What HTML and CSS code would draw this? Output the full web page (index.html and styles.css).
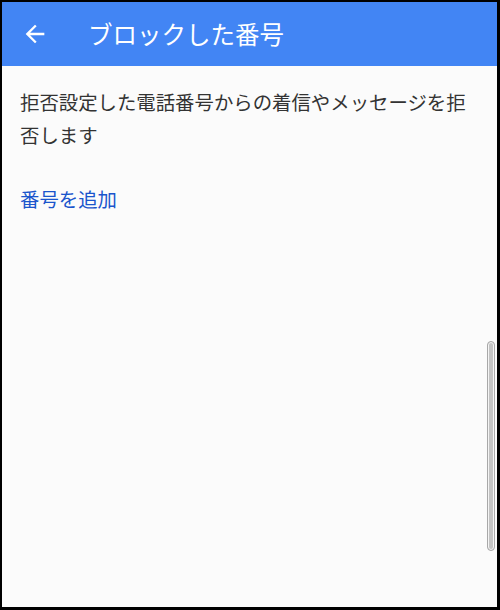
FILE: index.html
```html
<!DOCTYPE html>
<html lang="ja">
<head>
<meta charset="utf-8">
<link rel="stylesheet" href="styles.css">
</head>
<body>
<div class="frame">
  <header class="appbar">
    <span class="back">
      <svg viewBox="0 0 24 24" width="28" height="28"><path d="M20 11H7.83l5.59-5.59L12 4l-8 8 8 8 1.41-1.41L7.83 13H20v-2z" fill="#fff"/></svg>
    </span>
    <h1 class="title">ブロックした番号</h1>
  </header>
  <main class="content">
    <p class="desc">拒否設定した電話番号からの着信やメッセージを拒否します</p>
    <a class="add">番号を追加</a>
    <div class="scrollbar"></div>
  </main>
</div>
</body>
</html>
```
FILE: styles.css
```css
html, body {
  margin: 0;
  padding: 0;
}
body {
  width: 500px;
  height: 610px;
  font-family: "Noto Sans CJK JP", "Noto Sans", sans-serif;
}
.frame {
  box-sizing: border-box;
  width: 500px;
  height: 610px;
  border-style: solid;
  border-color: #000;
  border-width: 2px 3px 3px 2px;
  background: #fbfbfb;
  display: flex;
  flex-direction: column;
}
.appbar {
  height: 64px;
  background: #4285f4;
  display: flex;
  align-items: center;
  flex-shrink: 0;
}
.back {
  display: flex;
  margin-left: 19px;
  width: 28px;
  height: 28px;
}
.title {
  margin: 0 0 0 39px;
  font-size: 24.5px;
  font-weight: 400;
  color: #fff;
  line-height: 1;
}
.content {
  position: relative;
  flex: 1;
  padding: 19px 18px 0 18px;
}
.desc {
  margin: 0;
  font-size: 19.4px;
  line-height: 33px;
  color: #333;
}
.add {
  display: block;
  margin-top: 31px;
  font-size: 19.4px;
  line-height: 33px;
  color: #1a55cc;
}
.scrollbar {
  position: absolute;
  right: 2px;
  top: 275px;
  width: 6px;
  height: 208px;
  border: 1px solid #a8a8a8;
  border-radius: 4px;
  background: #c4c4c4;
  box-shadow: inset 0 0 0 1px #f4f4f4;
}
```
